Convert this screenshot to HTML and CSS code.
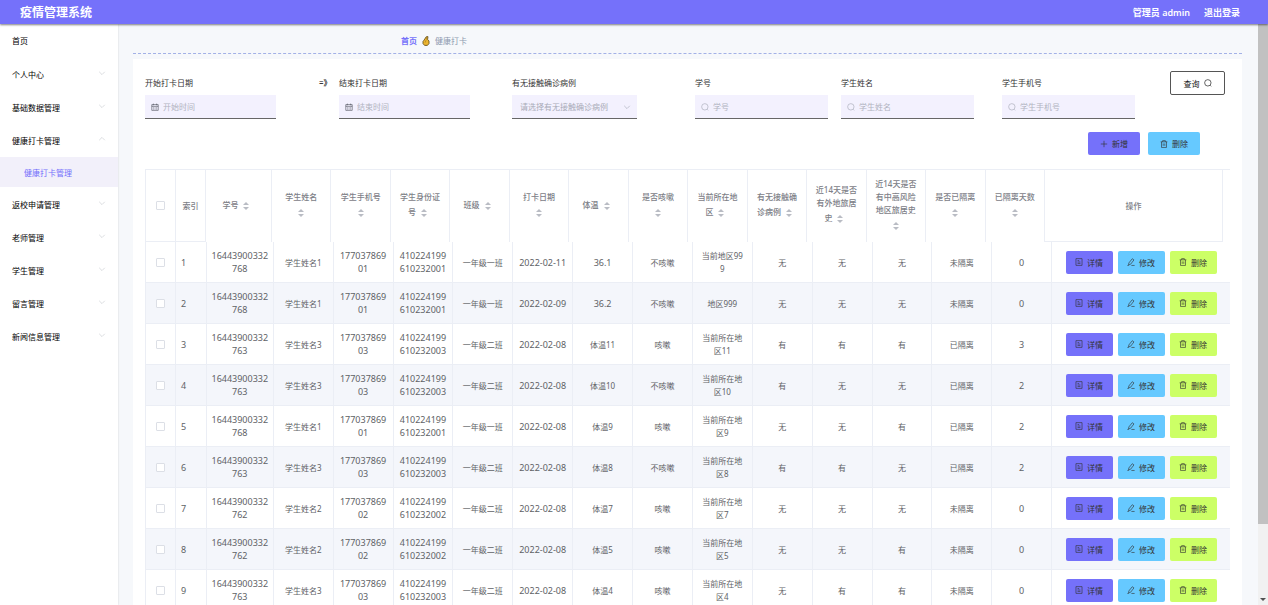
FILE: index.html
```html
<!DOCTYPE html>
<html lang="zh-CN">
  <head>
    <meta charset="UTF-8" />
    <meta name="viewport" content="width=device-width, initial-scale=1.0" />
    <title>疫情管理系统</title>
    <link rel="stylesheet" href="styles.css">
  </head>
  <body>
    <svg class="sprite" aria-hidden="true">
      <symbol id="icon-arrow" viewBox="0 0 10 10"><path d="M1.5 3.5 5 7l3.5-3.5" /></symbol>
      <symbol id="icon-search" viewBox="0 0 10 10"><circle cx="4.8" cy="4.8" r="4" /><path d="M7.6 7.8 9 9.2" /></symbol>
      <symbol id="icon-date" viewBox="0 0 10 10"><path d="M1 2h8v7.2H1zM1 4.2h8M3 .8v2M7 .8v2M2.8 6h1M4.6 6h1M6.4 6h1M2.8 7.6h1M4.6 7.6h1M6.4 7.6h1" /></symbol>
      <symbol id="icon-plus" viewBox="0 0 10 10"><path d="M5 1v8M1 5h8" /></symbol>
      <symbol id="icon-delete" viewBox="0 0 10 10"><path d="M.8 2.3h8.4M3.3 2.3V.8h3.4v1.5M1.9 2.3v7h6.2v-7M4 4.3v3M6 4.3v3" /></symbol>
      <symbol id="icon-tickets" viewBox="0 0 10 10"><path d="M1.2.8h7.6v8.4H1.2zM3.2 3.2h2M3.2 5h3.6M3.2 6.8h3.6" /></symbol>
      <symbol id="icon-edit" viewBox="0 0 10 10"><path d="M6.6.9 8.7 2.4 4.5 7.8 2 8.7 2.3 6.2zM5.5 9.3H9.5M.5 9.3h1.8" /></symbol>
    </svg>

    <header class="main-header">
      <h1 class="main-header__title">疫情管理系统</h1>
      <nav class="main-header__nav">
        <span>管理员 admin</span>
        <a href="#logout">退出登录</a>
      </nav>
    </header>

    <div class="layout">
      <aside class="sidebar">
        <ul class="menu">
          <li><a class="menu__item menu__item--home" href="#home">首页</a></li>
          <li><a class="menu__item" href="#center">个人中心<svg class="icon"><use href="#icon-arrow" /></svg></a></li>
          <li><a class="menu__item" href="#base">基础数据管理<svg class="icon"><use href="#icon-arrow" /></svg></a></li>
          <li>
            <a class="menu__item menu__item--open" href="#health">健康打卡管理<svg class="icon"><use href="#icon-arrow" /></svg></a>
            <ul class="submenu">
              <li><a class="submenu__item" href="#health-list">健康打卡管理</a></li>
            </ul>
          </li>
          <li><a class="menu__item" href="#back">返校申请管理<svg class="icon"><use href="#icon-arrow" /></svg></a></li>
          <li><a class="menu__item" href="#teacher">老师管理<svg class="icon"><use href="#icon-arrow" /></svg></a></li>
          <li><a class="menu__item" href="#student">学生管理<svg class="icon"><use href="#icon-arrow" /></svg></a></li>
          <li><a class="menu__item" href="#message">留言管理<svg class="icon"><use href="#icon-arrow" /></svg></a></li>
          <li><a class="menu__item" href="#news">新闻信息管理<svg class="icon"><use href="#icon-arrow" /></svg></a></li>
        </ul>
      </aside>

      <main class="content">
        <nav class="breadcrumb">
          <a href="#home">首页</a>
          <svg class="breadcrumb__hand" viewBox="0 0 8 10"><path class="breadcrumb__palm" d="M2 4.2 4.2.8 6 .6 5.6 3.4 7 5v2.6L5.4 9.4H2.6L1 7.6V5.4z" /><path class="breadcrumb__line" d="M4 4.2 3.2 6.6M4.4 1.4 4.6 3.6" /></svg>
          <span>健康打卡</span>
        </nav>

        <section class="card">
          <form class="search">
            <div class="field">
              <label for="startDate">开始打卡日期</label>
              <div class="field__box field__box--dark"><svg class="icon"><use href="#icon-date" /></svg><input id="startDate" type="text" placeholder="开始时间"></div>
            </div>
            <span class="search__to">=》</span>
            <div class="field">
              <label for="endDate">结束打卡日期</label>
              <div class="field__box field__box--dark"><svg class="icon"><use href="#icon-date" /></svg><input id="endDate" type="text" placeholder="结束时间"></div>
            </div>
            <div class="field">
              <label for="contact">有无接触确诊病例</label>
              <div class="field__box field__box--select">
                <select id="contact">
                  <option value="">请选择有无接触确诊病例</option>
                  <option>有</option>
                  <option>无</option>
                </select>
                <svg class="icon"><use href="#icon-arrow" /></svg>
              </div>
            </div>
            <div class="field">
              <label for="studentNo">学号</label>
              <div class="field__box"><svg class="icon"><use href="#icon-search" /></svg><input id="studentNo" type="text" placeholder="学号"></div>
            </div>
            <div class="field">
              <label for="studentName">学生姓名</label>
              <div class="field__box"><svg class="icon"><use href="#icon-search" /></svg><input id="studentName" type="text" placeholder="学生姓名"></div>
            </div>
            <div class="field">
              <label for="studentPhone">学生手机号</label>
              <div class="field__box"><svg class="icon"><use href="#icon-search" /></svg><input id="studentPhone" type="text" placeholder="学生手机号"></div>
            </div>
            <button class="btn btn--search" type="button">查询<svg class="icon"><use href="#icon-search" /></svg></button>
          </form>

          <div class="toolbar">
            <button class="btn btn--primary" type="button"><svg class="icon"><use href="#icon-plus" /></svg>新增</button>
            <button class="btn btn--info" type="button"><svg class="icon"><use href="#icon-delete" /></svg>删除</button>
          </div>

          <div class="grid">
            <table class="grid__head">
              <colgroup id="headCols"></colgroup>
              <thead>
                <tr>
                  <th class="fixed"><input type="checkbox" aria-label="全选"></th>
                  <th class="fixed">索引</th>
                  <th>学号<i class="caret"></i></th>
                  <th>学生姓名<i class="caret"></i></th>
                  <th>学生手机号<i class="caret"></i></th>
                  <th>学生身份证号<i class="caret"></i></th>
                  <th>班级<i class="caret"></i></th>
                  <th>打卡日期<i class="caret"></i></th>
                  <th>体温<i class="caret"></i></th>
                  <th>是否咳嗽<i class="caret"></i></th>
                  <th>当前所在地区<i class="caret"></i></th>
                  <th>有无接触确诊病例<i class="caret"></i></th>
                  <th>近14天是否有外地旅居史<i class="caret"></i></th>
                  <th>近14天是否有中高风险地区旅居史<i class="caret"></i></th>
                  <th>是否已隔离<i class="caret"></i></th>
                  <th>已隔离天数<i class="caret"></i></th>
                  <th class="fixed">操作</th>
                </tr>
              </thead>
            </table>
            <table class="grid__body">
              <colgroup id="bodyCols"></colgroup>
              <tbody id="rows"></tbody>
            </table>
          </div>
        </section>
      </main>

      <div class="scrollbar" aria-hidden="true">
        <div class="scrollbar__thumb"></div>
        <div class="scrollbar__arrow"></div>
      </div>
    </div>

    <script src="main.js"></script>
  </body>
</html>
```
FILE: styles.css
```css
* {
  box-sizing: border-box;
}

body {
  margin: 0;
  height: 100vh;
  display: flex;
  flex-direction: column;
  overflow: hidden;
  font-family: "Noto Sans", "Noto Sans CJK SC", sans-serif;
  font-size: 8px;
  line-height: 13px;
  color: #333;
  background-color: #f6f8fb;
}

a {
  color: inherit;
  text-decoration: none;
}

ul {
  list-style: none;
  margin: 0;
  padding: 0;
}

button,
input,
select {
  font: inherit;
  color: inherit;
}

.sprite {
  display: none;
}

.icon {
  width: 8px;
  height: 8px;
  flex: none;
  fill: none;
  stroke: currentColor;
  stroke-width: 0.8;
}

/* header */
.main-header {
  height: 24px;
  flex: none;
  display: flex;
  align-items: center;
  justify-content: space-between;
  padding: 0 28px 0 20px;
  color: #fff;
  background-color: #7571fa;
  box-shadow: 0 1px 2px rgba(0, 0, 0, 0.5);
  z-index: 1;
}

.main-header__title {
  margin: 0;
  font-size: 12px;
  font-weight: bold;
}

.main-header__nav {
  display: flex;
  gap: 14px;
  font-size: 9px;
  font-weight: 600;
}

.layout {
  flex: 1;
  min-height: 0;
  display: flex;
}

/* sidebar */
.sidebar {
  width: 118px;
  flex: none;
  background-color: #fff;
  box-shadow: 0 0 2px rgba(0, 0, 0, 0.15);
}

.menu__item {
  display: flex;
  align-items: center;
  justify-content: space-between;
  height: 33px;
  padding: 0 12px;
  color: #000;
}

.menu__item--home {
  margin-bottom: 1px;
}

.menu__item .icon {
  margin-bottom: 4px;
  color: #c8cbd0;
}

.menu__item--open .icon {
  transform: rotate(180deg);
}

.submenu {
  margin-bottom: 1px;
}

.submenu__item {
  display: flex;
  align-items: center;
  height: 30px;
  padding-left: 24px;
  color: #7571fa;
  background-color: #f2f0fa;
}

/* content */
.content {
  flex: 1;
  min-width: 0;
  overflow: hidden;
  padding: 0 16px 0 15px;
}

.breadcrumb {
  display: flex;
  align-items: center;
  gap: 5px;
  height: 30px;
  margin-bottom: 5px;
  padding: 4px 0 0 268px;
  border-bottom: 1px dashed #a3b1e6;
  color: #8e9bb0;
}

.breadcrumb a {
  color: #7571fa;
  font-weight: bold;
}

.breadcrumb__hand {
  width: 8px;
  height: 10px;
}

.breadcrumb__palm {
  fill: #edb52e;
  stroke: #5c4718;
  stroke-width: 0.8;
}

.breadcrumb__line {
  fill: none;
  stroke: #8a6820;
  stroke-width: 0.5;
}

.card {
  padding: 12px 12px 0;
  background-color: #fff;
}

/* search form */
.search {
  display: grid;
  grid-template-columns: 174fr 20fr 173fr 183fr 146fr 161fr 168fr 60fr;
  align-items: start;
}

.field {
  padding-top: 5px;
}

.field label {
  display: block;
  margin-bottom: 6px;
}

.search__to {
  padding-top: 5px;
  color: #000;
  font-weight: 500;
  white-space: nowrap;
}

.field__box {
  display: flex;
  align-items: center;
  gap: 4px;
  width: 133px;
  height: 24px;
  padding: 0 6px;
  color: #a9abb8;
  background-color: #f3f1fe;
  border-bottom: 1px solid #666;
}

.field__box--dark {
  width: 131px;
}

.field__box--dark .icon {
  color: #50545f;
}

.field__box--select {
  width: 125px;
  padding-left: 8px;
}

.field__box input,
.field__box select {
  flex: 1;
  min-width: 0;
  padding: 0;
  border: none;
  outline: none;
  background: none;
  appearance: none;
}

.field__box input::placeholder {
  color: #b1b3c0;
}

/* buttons */
.btn {
  display: inline-flex;
  align-items: center;
  justify-content: center;
  gap: 4px;
  height: 23px;
  padding: 0;
  border: none;
  border-radius: 2px;
  color: #333;
  cursor: pointer;
}

.btn--search {
  width: 55px;
  height: 24px;
  color: #111;
  background-color: #fff;
  border: 1px solid #555;
}

.btn--primary {
  background-color: #7571fa;
}

.btn--info {
  background-color: #66c9ff;
}

.btn--danger {
  background-color: #ccff66;
}

.toolbar {
  display: flex;
  justify-content: flex-end;
  gap: 8px;
  padding: 13px 30px 14px 0;
}

.toolbar .btn {
  width: 52px;
}

/* table */
.grid {
  border-top: 1px solid #ebeef5;
  border-left: 1px solid #ebeef5;
}

.grid table {
  width: 100%;
  table-layout: fixed;
  border-collapse: separate;
  border-spacing: 0;
}

/* leaves room for the gutter at the right of the head */
.grid .grid__head {
  width: calc(100% - 7px);
}

.grid th,
.grid td {
  padding: 0 6px;
  border-right: 1px solid #ebeef5;
  text-align: center;
  word-break: break-all;
}

.grid th {
  height: 72px;
  color: #7d8087;
  font-weight: 500;
}

.grid th.fixed,
.grid td {
  border-bottom: 1px solid #ebeef5;
}

.grid th.fixed,
.grid td.plain {
  padding: 0;
}

.grid td {
  height: 41px;
  padding: 0 7px;
  color: #606266;
}

.grid td.num {
  padding: 0 4px;
  font-size: 9px;
}

.grid td.index {
  padding-left: 5px;
  text-align: left;
  font-size: 9px;
}

.grid td:last-child {
  border-right: none;
}

.grid tbody tr:nth-child(even) {
  background-color: #f4f6fb;
}

.grid input[type="checkbox"] {
  appearance: none;
  display: block;
  width: 9px;
  height: 9px;
  margin: 0 auto;
  border: 1px solid #dcdfe6;
  border-radius: 1px;
  background-color: #fff;
}

.caret {
  display: inline-flex;
  flex-direction: column;
  align-items: center;
  justify-content: center;
  gap: 2px;
  width: 16px;
  height: 20px;
  vertical-align: middle;
}

.caret::before,
.caret::after {
  content: "";
  border: 3px solid transparent;
}

.caret::before {
  border-top: none;
  border-bottom-color: #b9bcc4;
}

.caret::after {
  border-bottom: none;
  border-top-color: #b9bcc4;
}

.actions {
  display: flex;
  justify-content: center;
  gap: 5px;
}

.actions .btn {
  width: 47px;
}

/* scrollbar */
.scrollbar {
  width: 10px;
  flex: none;
  display: flex;
  flex-direction: column;
  justify-content: space-between;
  align-items: center;
  background-color: #f1f1f1;
}

.scrollbar__thumb {
  width: 100%;
  height: 86%;
  background-color: #c1c1c1;
}

.scrollbar__arrow {
  margin-bottom: 4px;
  border: 3px solid transparent;
  border-top-color: #505050;
  border-bottom: none;
}
```
FILE: main.js
```js
// Relative column widths; the body runs on under the gutter of the head
const headWidths = [30, 30, 66, ...Array(13).fill(59.5), 178];
const bodyWidths = [30, 31, 67, ...Array(13).fill(60), 178];

function setColumns(id, widths) {
  const total = widths.reduce((a, b) => a + b, 0);
  document.getElementById(id).innerHTML = widths
    .map((w) => `<col style="width: ${(w / total) * 100}%">`)
    .join("");
}

setColumns("headCols", headWidths);
setColumns("bodyCols", bodyWidths);

const records = [
  ["16443900332768", "学生姓名1", "17703786901", "410224199610232001", "一年级一班", "2022-02-11", "36.1", "不咳嗽", "当前地区999", "无", "无", "无", "未隔离", "0"],
  ["16443900332768", "学生姓名1", "17703786901", "410224199610232001", "一年级一班", "2022-02-09", "36.2", "不咳嗽", "地区999", "无", "无", "无", "未隔离", "0"],
  ["16443900332763", "学生姓名3", "17703786903", "410224199610232003", "一年级二班", "2022-02-08", "体温11", "咳嗽", "当前所在地区11", "有", "有", "有", "已隔离", "3"],
  ["16443900332763", "学生姓名3", "17703786903", "410224199610232003", "一年级二班", "2022-02-08", "体温10", "不咳嗽", "当前所在地区10", "有", "无", "无", "已隔离", "2"],
  ["16443900332768", "学生姓名1", "17703786901", "410224199610232001", "一年级一班", "2022-02-08", "体温9", "咳嗽", "当前所在地区9", "无", "无", "有", "已隔离", "2"],
  ["16443900332763", "学生姓名3", "17703786903", "410224199610232003", "一年级二班", "2022-02-08", "体温8", "不咳嗽", "当前所在地区8", "有", "有", "无", "已隔离", "2"],
  ["16443900332762", "学生姓名2", "17703786902", "410224199610232002", "一年级二班", "2022-02-08", "体温7", "咳嗽", "当前所在地区7", "无", "无", "无", "未隔离", "0"],
  ["16443900332762", "学生姓名2", "17703786902", "410224199610232002", "一年级二班", "2022-02-08", "体温5", "咳嗽", "当前所在地区5", "无", "无", "有", "未隔离", "0"],
  ["16443900332763", "学生姓名3", "17703786903", "410224199610232003", "一年级二班", "2022-02-08", "体温4", "咳嗽", "当前所在地区4", "无", "有", "有", "未隔离", "0"],
];

const button = (type, icon, text) =>
  `<button class="btn btn--${type}" type="button"><svg class="icon"><use href="#icon-${icon}" /></svg>${text}</button>`;

document.getElementById("rows").innerHTML = records
  .map((record, i) => {
    const cells = record
      .map((value) => `<td class="${/^[\d.-]+$/.test(value) ? "num" : "text"}">${value}</td>`)
      .join("");
    return `
      <tr>
        <td class="plain"><input type="checkbox" aria-label="选择第${i + 1}行"></td>
        <td class="index">${i + 1}</td>
        ${cells}
        <td class="plain">
          <div class="actions">
            ${button("primary", "tickets", "详情")}
            ${button("info", "edit", "修改")}
            ${button("danger", "delete", "删除")}
          </div>
        </td>
      </tr>`;
  })
  .join("");
```
